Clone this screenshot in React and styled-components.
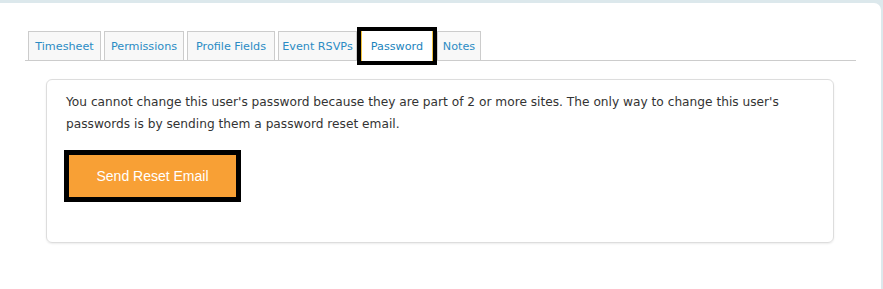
import React from 'react';
import styled, { createGlobalStyle } from 'styled-components';

const GlobalStyle = createGlobalStyle`
  html, body {
    margin: 0;
    padding: 0;
    background-color: #dce8ec;
    width: 883px;
    height: 289px;
    overflow: hidden;
  }
`;

const Page = styled.div`
  padding-top: 3px;
  padding-right: 2px;
  height: 289px;
  box-sizing: border-box;
`;

const Panel = styled.div`
  background-color: #ffffff;
  border-top-right-radius: 7px;
  height: 100%;
  padding: 28px 25px 0 25px;
  box-sizing: border-box;
  font-family: "DejaVu Sans", Verdana, sans-serif;
`;

const TabBar = styled.div`
  display: flex;
  align-items: flex-start;
  gap: 3px;
  padding-left: 3px;
  border-bottom: 1px solid #cccccc;
  height: 29px;
`;

const Tab = styled.div`
  box-sizing: border-box;
  width: ${p => p.w}px;
  height: 29px;
  display: flex;
  align-items: center;
  justify-content: center;
  white-space: nowrap;
  font-size: 11.2px;
  color: #2b8cc4;
  background-color: #f8f8f8;
  border: 1px solid #cccccc;
  border-bottom: none;
  ${p => p.active && `
    position: relative;
    z-index: 1;
    color: #1a84bd;
    background-color: #ffffff;
    border: none;
    border-left: 1px solid #f2c23c;
    border-right: 1px solid #f2c23c;
    height: 30px;
    margin-left: 1px;
    margin-right: 1px;
    outline: 4px solid #000000;
    outline-offset: 0;
  `}
`;

const Card = styled.div`
  margin: 18px 22px 0 21px;
  border: 1px solid #dddddd;
  border-radius: 6px;
  box-shadow: 0 1px 2px rgba(0, 0, 0, 0.08);
  padding: 11px 19px 40px 19px;
  height: 164px;
  box-sizing: border-box;
`;

const Message = styled.p`
  margin: 0;
  font-size: 12.2px;
  line-height: 22px;
  color: #333333;
`;

const ResetButton = styled.button`
  display: block;
  margin-top: 20px;
  margin-left: 3px;
  width: 167px;
  height: 42px;
  border: none;
  background-color: #f8a035;
  color: #ffffff;
  font-family: "Liberation Sans", Arial, sans-serif;
  font-size: 14px;
  outline: 5px solid #000000;
  outline-offset: 0;
  cursor: pointer;
`;

const tabs = [
  { label: 'Timesheet', w: 73 },
  { label: 'Permissions', w: 80 },
  { label: 'Profile Fields', w: 88 },
  { label: 'Event RSVPs', w: 79 },
  { label: 'Password', w: 72, active: true },
  { label: 'Notes', w: 44 },
];

export default function App() {
  return (
    <>
      <GlobalStyle />
      <Page>
        <Panel>
          <TabBar>
            {tabs.map(t => (
              <Tab key={t.label} w={t.w} active={t.active}>{t.label}</Tab>
            ))}
          </TabBar>
          <Card>
            <Message>
              You cannot change this user's password because they are part of 2 or more sites. The only way to change this user's passwords is by sending them a password reset email.
            </Message>
            <ResetButton>Send Reset Email</ResetButton>
          </Card>
        </Panel>
      </Page>
    </>
  );
}
